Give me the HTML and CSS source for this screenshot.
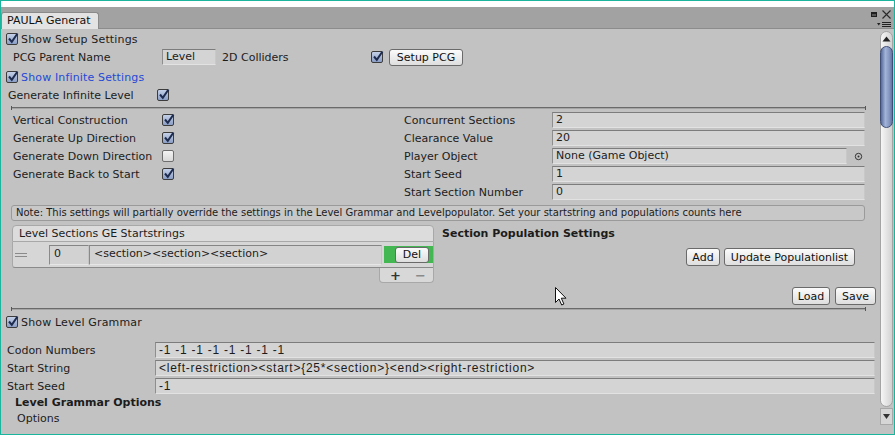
FILE: index.html
```html
<!DOCTYPE html>
<html>
<head>
<meta charset="utf-8">
<link rel="stylesheet" href="styles.css">
</head>
<body>
<div class="window">
  <div class="topgap"></div>
  <div class="titlebar">
    <div class="tab">PAULA Generat</div>
    <svg class="winicons" width="24" height="20" viewBox="0 0 24 20">
      <rect x="2" y="3" width="6" height="5" fill="#1e1e1e"/>
      <rect x="3" y="5" width="4" height="2" fill="#555"/>
      <path d="M13.5 1.5 L21.5 9.5 M21.5 1.5 L13.5 9.5" stroke="#2a2a2a" stroke-width="1.1" fill="none"/>
      <path d="M8 14 L11.5 14 L9.75 16.5 Z" fill="#222"/>
      <path d="M13 13.5 H22 M13 15.5 H22 M13 17.5 H22" stroke="#222" stroke-width="1" fill="none"/>
    </svg>
  </div>
  <div class="body">
    <div class="main">
      <div class="row">
        <span class="cb on"><svg viewBox="0 0 12 12"><path d="M2 5.5 L4.8 8.8 L10.5 0.5"/></svg></span>
        <span class="cbtext">Show Setup Settings</span>
      </div>
      <div class="row pcg">
        <span class="lbl w149">PCG Parent Name</span>
        <span class="field lvl">Level</span>
        <span class="lbl colliders">2D Colliders</span>
        <span class="cb on"><svg viewBox="0 0 12 12"><path d="M2 5.5 L4.8 8.8 L10.5 0.5"/></svg></span>
        <span class="btn setup">Setup PCG</span>
      </div>
      <div class="row gap2">
        <span class="cb on"><svg viewBox="0 0 12 12"><path d="M2 5.5 L4.8 8.8 L10.5 0.5"/></svg></span>
        <span class="cbtext blue">Show Infinite Settings</span>
      </div>
      <div class="row infinite">
        <span class="lbl w149">Generate Infinite Level</span>
        <span class="cb on"><svg viewBox="0 0 12 12"><path d="M2 5.5 L4.8 8.8 L10.5 0.5"/></svg></span>
      </div>

      <div class="indent">
        <div class="sep"></div>
        <div class="cols">
          <div class="colL">
            <div class="row"><span class="lbl w149">Vertical Construction</span><span class="cb on"><svg viewBox="0 0 12 12"><path d="M2 5.5 L4.8 8.8 L10.5 0.5"/></svg></span></div>
            <div class="row"><span class="lbl w149">Generate Up Direction</span><span class="cb on"><svg viewBox="0 0 12 12"><path d="M2 5.5 L4.8 8.8 L10.5 0.5"/></svg></span></div>
            <div class="row"><span class="lbl w149">Generate Down Direction</span><span class="cb off"></span></div>
            <div class="row"><span class="lbl w149">Generate Back to Start</span><span class="cb on"><svg viewBox="0 0 12 12"><path d="M2 5.5 L4.8 8.8 L10.5 0.5"/></svg></span></div>
          </div>
          <div class="colR">
            <div class="row"><span class="lbl w148">Concurrent Sections</span><span class="field grow">2</span></div>
            <div class="row"><span class="lbl w148">Clearance Value</span><span class="field grow">20</span></div>
            <div class="row"><span class="lbl w148">Player Object</span><span class="field grow">None (Game Object)</span><span class="picker"><svg width="9" height="9" viewBox="0 0 9 9"><circle cx="4.5" cy="4.5" r="3.2" fill="none" stroke="#333" stroke-width="1"/><circle cx="4.5" cy="4.5" r="1" fill="#333"/></svg></span></div>
            <div class="row"><span class="lbl w148">Start Seed</span><span class="field grow">1</span></div>
            <div class="row"><span class="lbl w148">Start Section Number</span><span class="field grow">0</span></div>
          </div>
        </div>
        <div class="note">Note: This settings will partially override the settings in the Level Grammar and Levelpopulator. Set your startstring and populations counts here</div>
        <div class="listblock">
          <div class="list">
            <div class="list-head">Level Sections GE Startstrings</div>
            <div class="list-body">
              <span class="handle"></span>
              <span class="lfield idx">0</span>
              <span class="lfield str">&lt;section&gt;&lt;section&gt;&lt;section&gt;</span>
              <span class="delcell"><span class="btn del">Del</span></span>
            </div>
            <div class="list-foot"><span class="plus">+</span><span class="minus">−</span></div>
          </div>
          <div class="pop">
            <div class="pop-title">Section Population Settings</div>
            <div class="pop-btns">
              <span class="btn add">Add</span>
              <span class="btn update">Update Populationlist</span>
            </div>
          </div>
        </div>
      </div>

      <div class="row loadsave">
        <span class="btn load">Load</span>
        <span class="btn save">Save</span>
      </div>

      <div class="indent">
        <div class="sep sep2"></div>
      </div>

      <div class="row">
        <span class="cb on"><svg viewBox="0 0 12 12"><path d="M2 5.5 L4.8 8.8 L10.5 0.5"/></svg></span>
        <span class="cbtext">Show Level Grammar</span>
      </div>
      <div class="grammar">
        <div class="row"><span class="lbl w148">Codon Numbers</span><span class="field grow mono">-1 -1 -1 -1 -1 -1 -1 -1</span></div>
        <div class="row"><span class="lbl w148">Start String</span><span class="field grow mono">&lt;left-restriction&gt;&lt;start&gt;{25*&lt;section&gt;}&lt;end&gt;&lt;right-restriction&gt;</span></div>
        <div class="row"><span class="lbl w148">Start Seed</span><span class="field grow mono">-1</span></div>
      </div>
      <div class="lgo">Level Grammar Options</div>
      <div class="opts">Options</div>
    </div>
    <div class="scroll">
      <div class="track">
        <div class="uparrow"><svg width="9" height="6" viewBox="0 0 9 6"><path d="M0.5 5.5 L4.5 0.5 L8.5 5.5 Z" fill="#222"/></svg></div>
        <div class="thumb"></div>
      </div>
      <div class="downbtn"><svg width="7" height="5" viewBox="0 0 7 5"><path d="M0 0 L7 0 L3.5 5 Z" fill="#333"/></svg></div>
    </div>
  </div>
  <svg class="cursor" width="13" height="19" viewBox="0 0 13 19">
    <path d="M0.5 0.5 L0.5 15.5 L4 12 L6.7 18 L8.9 17 L6.3 11.2 L11 11.2 Z" fill="#fff" stroke="#111" stroke-width="1" stroke-linejoin="miter"/>
  </svg>
</div>
</body>
</html>
```

FILE: styles.css
```css
* { box-sizing: border-box; }
body {
  margin: 0;
  font-family: "DejaVu Sans", "Noto Sans", sans-serif;
  font-size: 11px;
  color: #1c1c1c;
}
.window {
  width: 895px;
  height: 435px;
  border: 1px solid #1ab59c;
  background: #c2c2c2;
  display: flex;
  flex-direction: column;
  overflow: hidden;
  position: relative;
}
.topgap { height: 6px; background: #ffffff; flex: none; }
.titlebar {
  height: 22px;
  flex: none;
  background: #a2a2a2;
  border-bottom: 1px solid #8c8c8c;
  display: flex;
  align-items: flex-end;
}
.tab {
  position: relative;
  height: 17px;
  width: 98px;
  margin-bottom: -1px;
  background: #e3e3e3;
  border: 1px solid #8a8a8a;
  border-bottom: none;
  border-radius: 3px 3px 0 0;
  padding-left: 5px;
  line-height: 15px;
  color: #111;
}
.winicons { align-self: flex-start; margin: 2px 1px 0 auto; }

.body { flex: 1; display: flex; min-height: 0; }
.main { flex: 1; padding: 1px 3px 0 5px; }

.row { height: 18px; display: flex; align-items: center; white-space: nowrap; }
.gap2 { margin-top: 2px; }
.cb {
  width: 12px; height: 12px; flex: none;
  border: 1px solid #3c3c3c;
  border-radius: 2px;
  position: relative;
}
.cb.on { background: linear-gradient(#c4d0e8, #8b9ec6); }
.cb.off { background: linear-gradient(#f4f4f4, #d9d9d9); border-color: #6e6e6e; }
.cb svg { position: absolute; left: 0; top: -1px; width: 12px; height: 12px; overflow: visible; }
.cb svg path { fill: none; stroke: #1d2b4e; stroke-width: 2; }
.cbtext { margin-left: 3px; letter-spacing: 0.15px; }
.blue { color: #2549d6; }

.lbl { flex: none; }
.w149 { width: 149px; }
.w148 { width: 148px; }
.pcg { padding-left: 7px; }
.infinite { padding-left: 2px; }
.colliders { width: 149px; margin-left: 6px; }

.field {
  height: 16px;
  background: #d4d4d4;
  border: 1px solid;
  border-color: #7c7c7c #c8c8c8 #e2e2e2 #8e8e8e;
  padding-left: 3px;
  line-height: 14px;
  overflow: hidden;
  white-space: nowrap;
}
.lvl { width: 54px; }
.grow { flex: 1; min-width: 0; }
.mono { font-family: "Liberation Sans", Arial, sans-serif; font-size: 12px; letter-spacing: 0.75px; }

.btn {
  display: inline-flex;
  align-items: center;
  justify-content: center;
  height: 18px;
  border: 1px solid #6a6a6a;
  border-radius: 3px;
  background: linear-gradient(#fbfbfb, #dedede);
  color: #111;
  flex: none;
  white-space: nowrap;
}
.setup { width: 74px; height: 17px; margin-left: 6px; }

.indent { margin: 0 10px 0 5px; }
.sep { height: 7px; padding-top: 2px; }
.sep::before {
  content: "";
  display: block;
  height: 4px;
  border-left: 1px solid #555;
  border-right: 1px solid #555;
  background: linear-gradient(transparent 1px, #6a6a6a 1px, #6a6a6a 2px, #a4a4a4 2px, #a4a4a4 3px, transparent 3px);
}
.sep2 { height: 8px; }

.cols { display: flex; }
.colL { width: 393px; padding-left: 2px; }
.colR { flex: 1; padding-right: 1px; }
.picker { width: 18px; flex: none; display: flex; justify-content: flex-end; padding-right: 2px; }

.note {
  margin: 4px 1px 0 0;
  height: 16px;
  border: 1px solid #9a9a9a;
  border-radius: 3px;
  background: #c8c8c8;
  font-size: 10px;
  line-height: 14px;
  padding-left: 4px;
  white-space: nowrap;
  overflow: hidden;
}

.listblock { display: flex; margin-top: 4px; }
.list { width: 422px; margin-left: 1px; flex: none; }
.list-head {
  height: 17px;
  background: #dcdcdc;
  border: 1px solid #a8a8a8;
  border-radius: 4px 4px 0 0;
  padding-left: 6px;
  line-height: 15px;
}
.list-body {
  height: 26px;
  background: #d6d6d6;
  border: 1px solid #a8a8a8;
  border-top: none;
  border-bottom-color: #8a8a8a;
  border-radius: 0 0 0 3px;
  display: flex;
  align-items: center;
}
.handle {
  width: 12px; height: 4px; margin-left: 2px; margin-right: 22px; flex: none;
  border-top: 1px solid #8a8a8a;
  border-bottom: 1px solid #8a8a8a;
}
.lfield {
  height: 20px;
  background: #d2d2d2;
  border: 1px solid;
  border-color: #858585 #c4c4c4 #e6e6e6 #8a8a8a;
  line-height: 14px;
  padding: 1px 4px;
  flex: none;
  white-space: nowrap;
}
.idx { width: 40px; }
.str { width: 293px; }
.delcell {
  margin-left: 2px;
  flex: 1;
  height: 17px;
  background: #43b852;
  display: flex;
  align-items: center;
  padding-left: 11px;
}
.del { width: 34px; height: 16px; }
.list-foot {
  margin-left: 367px;
  width: 55px;
  height: 15px;
  background: #d8d8d8;
  border: 1px solid #a8a8a8;
  border-top: none;
  border-radius: 0 0 4px 4px;
  display: flex;
  align-items: center;
  font-weight: bold;
  font-size: 13px;
  line-height: 13px;
}
.plus { width: 13px; margin-left: 9px; text-align: center; color: #333; }
.minus { width: 13px; margin-left: 12px; text-align: center; color: #8a8a8a; }

.pop { flex: 1; padding-left: 8px; }
.pop-title { height: 17px; line-height: 17px; font-weight: bold; }
.pop-btns { display: flex; justify-content: flex-end; gap: 4px; margin-top: 6px; padding-right: 11px; }
.add { width: 34px; }
.update { width: 131px; }

.loadsave { justify-content: flex-end; gap: 5px; margin-top: 4px; }
.load { width: 38px; }
.save { width: 41px; }

.grammar { margin-top: 10px; padding-left: 1px; padding-right: 1px; }
.lgo { height: 16px; line-height: 16px; padding-left: 9px; font-weight: bold; }
.opts { height: 16px; line-height: 16px; padding-left: 11px; }

.scroll { width: 15px; flex: none; padding: 2px 1px 0 1px; display: flex; flex-direction: column; }
.track {
  height: 376px;
  border: 1px solid #a4a4a4;
  border-radius: 7px;
  background: linear-gradient(90deg, #f6f6f6, #d2d2d2);
  display: flex;
  flex-direction: column;
}
.uparrow { height: 14px; display: flex; justify-content: center; align-items: center; }
.thumb {
  height: 82px;
  margin: 0 -1px;
  border: 1px solid #3e4e76;
  border-radius: 7px;
  background: linear-gradient(90deg, #56699a, #a3b4d8 40%, #8496c0 75%, #64769f);
}
.downbtn {
  margin-top: 1px;
  height: 17px;
  border: 1px solid #a8a8a8;
  background: #d6d6d6;
  display: flex;
  justify-content: center;
  align-items: center;
}
.cursor { position: absolute; left: 554px; top: 286px; }
```
